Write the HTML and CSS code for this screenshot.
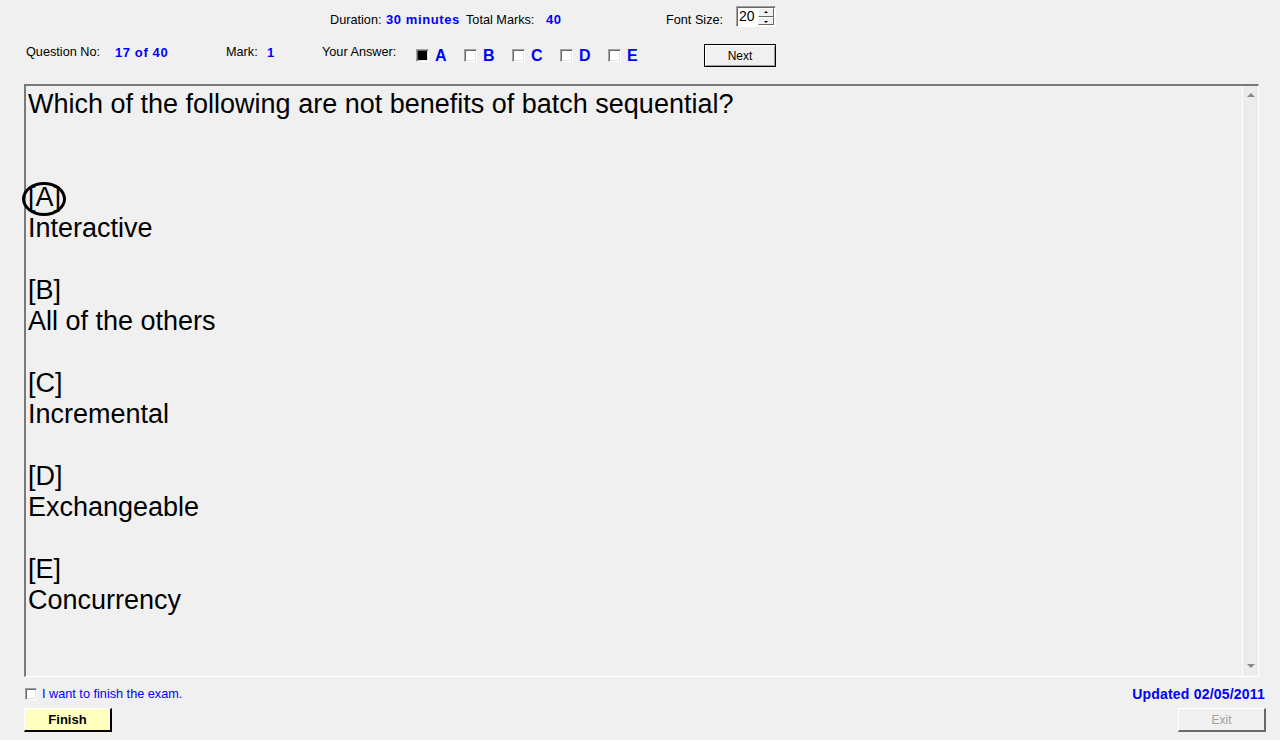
FILE: index.html
```html
<!DOCTYPE html>
<html>
<head>
<meta charset="utf-8">
<title>Exam</title>
<link rel="stylesheet" href="styles.css">
</head>
<body>
<div class="app">
  <div class="row row1">
    <span class="lbl w56">Duration:</span><span class="val w80">30 minutes</span>
    <span class="lbl w80">Total Marks:</span><span class="val w120">40</span>
    <span class="lbl w70">Font Size:</span>
    <span class="spin"><span class="spin-val">20</span><span class="spin-btns"><span class="sb up"></span><span class="sb down"></span></span></span>
  </div>
  <div class="row row2">
    <span class="lbl w89">Question No:</span><span class="val w111">17 of 40</span>
    <span class="lbl w41">Mark:</span><span class="val w55">1</span>
    <span class="lbl w94">Your Answer:</span>
    <span class="opts">
      <span class="opt"><span class="cb checked"></span><span class="ol">A</span></span>
      <span class="opt"><span class="cb"></span><span class="ol">B</span></span>
      <span class="opt"><span class="cb"></span><span class="ol">C</span></span>
      <span class="opt"><span class="cb"></span><span class="ol">D</span></span>
      <span class="opt"><span class="cb"></span><span class="ol">E</span></span>
    </span>
    <span class="btn next">Next</span>
  </div>
  <div class="qbox">
    <div class="qtext">
      <div class="line">Which of the following are not benefits of batch sequential?</div>
      <div class="line">&nbsp;</div>
      <div class="line">&nbsp;</div>
      <div class="line"><span class="circled">[A]<span class="ring"></span></span></div>
      <div class="line">Interactive</div>
      <div class="line">&nbsp;</div>
      <div class="line">[B]</div>
      <div class="line">All of the others</div>
      <div class="line">&nbsp;</div>
      <div class="line">[C]</div>
      <div class="line">Incremental</div>
      <div class="line">&nbsp;</div>
      <div class="line">[D]</div>
      <div class="line">Exchangeable</div>
      <div class="line">&nbsp;</div>
      <div class="line">[E]</div>
      <div class="line">Concurrency</div>
    </div>
    <div class="scroll">
      <span class="arr arr-up"></span>
      <span class="arr arr-down"></span>
    </div>
  </div>
  <div class="row row3">
    <span class="cb small"></span><span class="finish-lbl">I want to finish the exam.</span>
    <span class="updated">Updated 02/05/2011</span>
  </div>
  <div class="row row4">
    <span class="btn finish">Finish</span>
    <span class="btn exit">Exit</span>
  </div>
</div>
</body>
</html>
```
FILE: styles.css
```css
html, body {
  margin: 0;
  padding: 0;
  background: #f0f0f0;
}
body {
  font-family: "Liberation Sans", Arial, sans-serif;
  font-size: 12.7px;
  color: #000;
  width: 1280px;
  height: 740px;
  overflow: hidden;
}
.app {
  display: flex;
  flex-direction: column;
}
.row {
  display: flex;
  align-items: center;
}
.lbl { color: #000; white-space: nowrap; }
.val {
  color: #0000ff;
  font-weight: bold;
  font-size: 13px;
  letter-spacing: 0.6px;
  white-space: nowrap;
}
.w41 { width: 41px; }
.w55 { width: 55px; }
.w56 { width: 56px; }
.w70 { width: 70px; }
.w80 { width: 80px; }
.w89 { width: 89px; }
.w94 { width: 94px; }
.w111 { width: 111px; }
.w120 { width: 120px; }

.row1 {
  height: 40px;
  padding-left: 330px;
  padding-top: 13px;
  box-sizing: border-box;
  align-items: flex-start;
}
.row1 .lbl, .row1 .val { line-height: 14px; }
.spin {
  width: 40px;
  height: 21px;
  box-sizing: border-box;
  background: #fff;
  border-top: 1px solid #a0a0a0;
  border-left: 1px solid #a0a0a0;
  border-right: 1px solid #fff;
  border-bottom: 1px solid #fff;
  box-shadow: inset 1px 1px 0 #696969;
  display: flex;
  align-items: stretch;
  margin-top: -7px;
}
.spin-val {
  flex: 1;
  font-size: 14px;
  line-height: 19px;
  padding-left: 2px;
}
.spin-btns {
  width: 16px;
  display: flex;
  flex-direction: column;
  padding: 1px 1px 1px 0;
}
.sb {
  flex: 1;
  background: #f0f0f0;
  border-top: 1px solid #fff;
  border-left: 1px solid #fff;
  border-right: 1px solid #696969;
  border-bottom: 1px solid #696969;
  position: relative;
}
.sb::after {
  content: "";
  position: absolute;
  left: 5px;
  width: 0;
  height: 0;
  border-left: 2px solid transparent;
  border-right: 2px solid transparent;
}
.up::after { top: 2px; border-bottom: 2px solid #000; }
.down::after { top: 3px; border-top: 2px solid #000; }

.row2 {
  height: 24px;
  padding-left: 26px;
  box-sizing: border-box;
}
.opts {
  display: flex;
  margin-top: 6px;
}
.opt {
  display: flex;
  align-items: center;
  width: 48px;
}
.cb {
  width: 13px;
  height: 13px;
  box-sizing: border-box;
  background: #fff;
  border-top: 1px solid #a0a0a0;
  border-left: 1px solid #a0a0a0;
  border-right: 1px solid #fff;
  border-bottom: 1px solid #fff;
  box-shadow: inset 1px 1px 0 #696969, inset -1px -1px 0 #e3e3e3;
  display: inline-block;
  flex: none;
}
.cb.checked {
  background: #000;
  box-shadow: inset 1px 1px 0 #696969, inset -1px -1px 0 #e3e3e3, inset 0 0 0 2px #000;
}
.ol {
  color: #0000ff;
  font-weight: bold;
  font-size: 16px;
  margin-left: 6px;
  margin-top: 2px;
}
.btn {
  display: flex;
  align-items: center;
  justify-content: center;
  box-sizing: border-box;
}
.next {
  margin-left: 48px;
  width: 72px;
  height: 23px;
  border: 1px solid #000;
  box-shadow: inset 1px 1px 0 #fff, inset -1px -1px 0 #a0a0a0;
  background: #f0f0f0;
  font-size: 12px;
  margin-top: 7px;
}

.qbox {
  margin-left: 24px;
  margin-top: 20px;
  width: 1235px;
  height: 593px;
  box-sizing: border-box;
  border-top: 2px solid #7a7a7a;
  border-left: 2px solid #7a7a7a;
  border-right: 1px solid #fff;
  border-bottom: 1px solid #fff;
  display: flex;
}
.qtext {
  flex: 1;
  padding-top: 3px;
  padding-left: 2px;
  font-size: 27px;
  line-height: 31px;
  color: #000;
}
.line { white-space: nowrap; }
.circled {
  position: relative;
  display: inline-block;
}
.ring {
  position: absolute;
  left: -6px;
  top: 0px;
  width: 44px;
  height: 34px;
  box-sizing: border-box;
  border: 3px solid #000;
  border-radius: 50%;
}
.scroll {
  width: 16px;
  border-left: 1px solid #fff;
  background: #ececec;
  display: flex;
  flex-direction: column;
  justify-content: space-between;
  align-items: center;
  padding: 7px 0 8px;
  box-sizing: border-box;
}
.arr {
  width: 0;
  height: 0;
  border-left: 4px solid transparent;
  border-right: 4px solid transparent;
}
.arr-up { border-bottom: 4px solid #8a8a8a; }
.arr-down { border-top: 4px solid #8a8a8a; }

.row3 {
  margin-top: 11px;
  height: 12px;
  padding-left: 25px;
  padding-right: 15px;
}
.cb.small {
  width: 12px;
  height: 12px;
}
.finish-lbl {
  color: #0000ff;
  margin-left: 5px;
}
.updated {
  margin-left: auto;
  color: #0000ff;
  font-weight: bold;
  font-size: 14px;
  letter-spacing: 0.2px;
}
.row4 {
  margin-top: 8px;
  padding-left: 24px;
  padding-right: 14px;
}
.finish {
  width: 88px;
  height: 24px;
  background: #ffffc0;
  border-top: 1px solid #fff;
  border-left: 1px solid #fff;
  border-right: 2px solid #000;
  border-bottom: 2px solid #000;
  font-weight: bold;
  font-size: 13px;
}
.exit {
  margin-left: auto;
  width: 88px;
  height: 24px;
  background: #f0f0f0;
  border-top: 1px solid #fff;
  border-left: 1px solid #fff;
  border-right: 2px solid #696969;
  border-bottom: 2px solid #696969;
  color: #a0a0a0;
  font-size: 12px;
}
```
